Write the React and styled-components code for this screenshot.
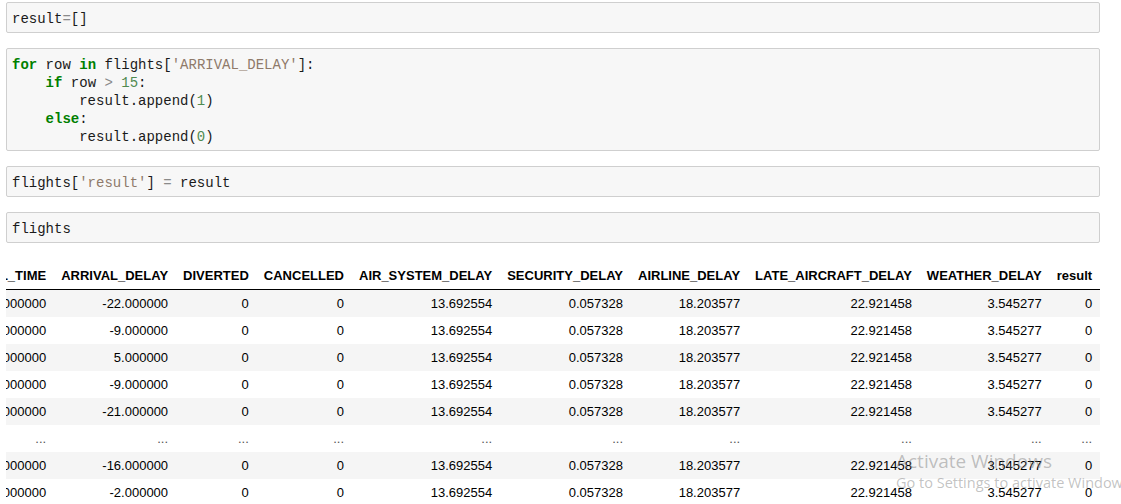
import React, { useLayoutEffect, useRef } from "react";
import styled, { createGlobalStyle } from "styled-components";

const GlobalStyle = createGlobalStyle`
  html, body {
    margin: 0;
    padding: 0;
    background: #ffffff;
  }
  body {
    font-family: "Liberation Sans", Arial, sans-serif;
    overflow: hidden;
  }
`;

const Page = styled.div`
  position: relative;
  width: 1121px;
  height: 504px;
  overflow: hidden;
  box-sizing: border-box;
  padding: 2px 21px 0 6px;
`;

const Notebook = styled.div`
  display: flex;
  flex-direction: column;
  gap: 15px;
`;

const CodeCell = styled.div`
  background: #f7f7f7;
  border: 1px solid #cfcfcf;
  border-radius: 2px;
  padding: 7px 5px 4px 5px;
  font-family: "Liberation Mono", "DejaVu Sans Mono", monospace;
  font-size: 14px;
  line-height: 18px;
  color: #1a1a1a;
  white-space: pre;
`;

const Kw = styled.span`
  color: #008000;
  font-weight: bold;
`;

const Str = styled.span`
  color: #8f7a6a;
`;

const Num = styled.span`
  color: #4f8a4f;
`;

const Op = styled.span`
  color: #8a8a8a;
`;

const TableScroll = styled.div`
  margin-top: 19px;
  overflow-x: auto;
  scrollbar-width: none;
  &::-webkit-scrollbar {
    display: none;
  }
`;

const Frame = styled.table`
  border-collapse: collapse;
  border: none;
  font-family: "Liberation Sans", Arial, sans-serif;
  font-size: 13px;
  color: #000000;

  th,
  td {
    padding: 6px 7.5px;
    line-height: 15px;
    text-align: right;
    white-space: nowrap;
    vertical-align: middle;
  }

  thead th {
    font-weight: bold;
    border-bottom: 1px solid #000000;
  }

  tbody th {
    font-weight: bold;
  }

  tbody tr:nth-child(odd) {
    background: #f5f5f5;
  }
`;

const Dots = styled.td`
  color: #555555;
`;

const Watermark = styled.div`
  position: absolute;
  left: 896px;
  top: 449px;
  font-family: "Open Sans", "Noto Sans", sans-serif;
  color: rgba(120, 120, 120, 0.45);
  white-space: nowrap;
  pointer-events: none;
`;

const WatermarkTitle = styled.div`
  font-size: 19px;
  line-height: 24px;
`;

const WatermarkHint = styled.div`
  font-size: 14.5px;
  line-height: 20px;
`;

const columns = [
  "",
  "SCHEDULED_ARRIVAL",
  "ARRIVAL_TIME",
  "ARRIVAL_DELAY",
  "DIVERTED",
  "CANCELLED",
  "AIR_SYSTEM_DELAY",
  "SECURITY_DELAY",
  "AIRLINE_DELAY",
  "LATE_AIRCRAFT_DELAY",
  "WEATHER_DELAY",
  "result",
];

const rows = [
  { idx: "0", sched: "430", arr: "1000.000000", delay: "-22.000000" },
  { idx: "1", sched: "750", arr: "1000.000000", delay: "-9.000000" },
  { idx: "2", sched: "806", arr: "1000.000000", delay: "5.000000" },
  { idx: "3", sched: "805", arr: "1000.000000", delay: "-9.000000" },
  { idx: "4", sched: "320", arr: "1000.000000", delay: "-21.000000" },
  null,
  { idx: "5819077", sched: "809", arr: "1000.000000", delay: "-16.000000" },
  { idx: "5819078", sched: "432", arr: "1000.000000", delay: "-2.000000" },
];

const App = () => {
  const scrollRef = useRef(null);

  useLayoutEffect(() => {
    const el = scrollRef.current;
    if (el) el.scrollLeft = el.scrollWidth;
  }, []);

  return (
    <Page>
      <GlobalStyle />
      <Notebook>
        <CodeCell>
          result<Op>=</Op>[]
        </CodeCell>
        <CodeCell>
          <Kw>for</Kw> row <Kw>in</Kw> flights[<Str>'ARRIVAL_DELAY'</Str>]:
          {"\n    "}
          <Kw>if</Kw> row <Op>&gt;</Op> <Num>15</Num>:
          {"\n        "}result.append(<Num>1</Num>)
          {"\n    "}
          <Kw>else</Kw>:
          {"\n        "}result.append(<Num>0</Num>)
        </CodeCell>
        <CodeCell>
          flights[<Str>'result'</Str>] <Op>=</Op> result
        </CodeCell>
        <CodeCell>flights</CodeCell>
      </Notebook>

      <TableScroll ref={scrollRef}>
        <Frame>
          <thead>
            <tr>
              {columns.map((c, i) => (
                <th key={i}>{c}</th>
              ))}
            </tr>
          </thead>
          <tbody>
            {rows.map((r, i) =>
              r ? (
                <tr key={i}>
                  <th>{r.idx}</th>
                  <td>{r.sched}</td>
                  <td>{r.arr}</td>
                  <td>{r.delay}</td>
                  <td>0</td>
                  <td>0</td>
                  <td>13.692554</td>
                  <td>0.057328</td>
                  <td>18.203577</td>
                  <td>22.921458</td>
                  <td>3.545277</td>
                  <td>0</td>
                </tr>
              ) : (
                <tr key={i}>
                  <th>...</th>
                  {columns.slice(1).map((c) => (
                    <Dots key={c}>...</Dots>
                  ))}
                </tr>
              )
            )}
          </tbody>
        </Frame>
      </TableScroll>

      <Watermark>
        <WatermarkTitle>Activate Windows</WatermarkTitle>
        <WatermarkHint>Go to Settings to activate Windows.</WatermarkHint>
      </Watermark>
    </Page>
  );
};

export default App;
